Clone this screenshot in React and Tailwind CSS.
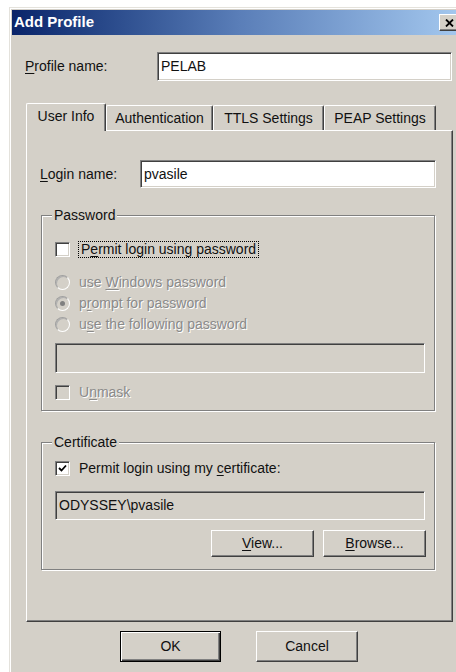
const sunken =
  'border border-t-[#808080] border-l-[#808080] border-b-white border-r-white shadow-[inset_1px_1px_0_#404040,inset_-1px_-1px_0_#d4d0c8]'
const raised =
  'border border-t-white border-l-white border-b-[#404040] border-r-[#404040] shadow-[inset_-1px_-1px_0_#808080]'
const dim = 'text-[#8a8a8a] [text-shadow:1px_1px_0_#fff]'

// mnemonic letter
function K({ children }) {
  return <span className="underline underline-offset-2">{children}</span>
}

function CheckBox({ checked, disabled }) {
  return (
    <span
      className={`w-[15px] h-[15px] shrink-0 flex items-center justify-center ${sunken} ${
        disabled ? 'bg-[#d4d0c8]' : 'bg-white'
      }`}
    >
      {checked && (
        <svg width="9" height="9" viewBox="0 0 9 9">
          <polyline points="1,4 3.5,6.5 8,1.5" fill="none" stroke="#000" strokeWidth="1.8" />
        </svg>
      )}
    </span>
  )
}

function Radio({ on }) {
  return (
    <span className="w-[15px] h-[15px] shrink-0 rounded-full border border-t-[#a0a0a0] border-l-[#a0a0a0] border-b-white border-r-white bg-[#d4d0c8] shadow-[inset_1px_1px_0_#b0b0b0] flex items-center justify-center">
      {on && <span className="w-[5px] h-[5px] rounded-full bg-[#808080]" />}
    </span>
  )
}

function Group({ title, className, children }) {
  return (
    <div className={`relative border border-[#808080] shadow-[1px_1px_0_#fff,inset_1px_1px_0_#fff] ${className}`}>
      <span className="absolute -top-[9px] left-[10px] bg-[#d4d0c8] px-[2px] leading-[16px]">{title}</span>
      {children}
    </div>
  )
}

function Button({ children, def, className }) {
  return (
    <button
      className={`flex items-center justify-center bg-[#d4d0c8] ${
        def
          ? 'border border-black shadow-[inset_1px_1px_0_#fff,inset_-1px_-1px_0_#404040,inset_-2px_-2px_0_#808080]'
          : raised
      } ${className}`}
    >
      {children}
    </button>
  )
}

function Tab({ label, active, className }) {
  return (
    <div
      className={`flex items-center justify-center bg-[#d4d0c8] border-t border-l border-t-white border-l-white border-r border-r-[#404040] rounded-t-[2px] shadow-[inset_-1px_0_0_#808080] ${
        active ? 'h-[28px] relative z-10 -mb-px pb-[2px]' : 'h-[25px]'
      } ${className}`}
    >
      {label}
    </div>
  )
}

export default function App() {
  return (
    <div className="h-[672px] overflow-hidden bg-white pt-[7px] pl-[9px] font-['Liberation_Sans',Arial,sans-serif] text-[14px] text-[#111]">
      <div className="w-[460px] h-[700px] bg-[#d4d0c8] p-[3px] shadow-[inset_1px_1px_0_#e4e2dc,inset_2px_2px_0_#fff]">
        {/* title bar */}
        <div className="h-[25px] flex items-center justify-between bg-linear-to-r from-[#0a246a] via-[#5a7eb8] to-[#a6caf0]">
          <span className="pl-[2px] text-white font-bold text-[15px]">Add Profile</span>
          <span className={`mr-[6px] w-[21px] h-[17px] bg-[#d4d0c8] flex items-center justify-center ${raised}`}>
            <svg width="9" height="8" viewBox="0 0 9 8">
              <path d="M1 0.5 L8 7.5 M8 0.5 L1 7.5" stroke="#000" strokeWidth="1.8" />
            </svg>
          </span>
        </div>

        {/* profile name */}
        <div className="mt-[17px] ml-[13px] flex items-center">
          <span className="w-[132px]">
            <K>P</K>rofile name:
          </span>
          <div className={`w-[295px] h-[29px] bg-white pl-[3px] pt-[3px] ${sunken}`}>PELAB</div>
        </div>

        {/* tabs */}
        <div className="mt-[22px] ml-[14px] flex items-end">
          <Tab label="User Info" active className="w-[80px]" />
          <Tab label="Authentication" className="w-[107px]" />
          <Tab label="TTLS Settings" className="w-[111px]" />
          <Tab label="PEAP Settings" className="w-[112px]" />
        </div>

        <div className={`ml-[14px] w-[427px] h-[492px] ${raised} flex flex-col`}>
          <div className="mt-[29px] ml-[13px] flex items-center">
            <span className="w-[100px]">
              <K>L</K>ogin name:
            </span>
            <div className={`w-[296px] h-[28px] bg-white pl-[3px] pt-[3px] ${sunken}`}>pvasile</div>
          </div>

          {/* password */}
          <Group title="Password" className="mt-[27px] ml-[14px] w-[394px] h-[196px] pl-[13px] pt-[25px]">
            <div className="flex items-center h-[17px]">
              <CheckBox />
              <span className="ml-[8px] border border-dotted border-black px-[2px] leading-[15px]">
                P<K>e</K>rmit login using password
              </span>
            </div>
            <div className={`mt-[14px] flex flex-col ${dim}`}>
              <div className="flex items-center gap-[9px] h-[21px]">
                <Radio />
                <span>
                  use <K>W</K>indows password
                </span>
              </div>
              <div className="flex items-center gap-[9px] h-[21px]">
                <Radio on />
                <span>
                  p<K>r</K>ompt for password
                </span>
              </div>
              <div className="flex items-center gap-[9px] h-[21px]">
                <Radio />
                <span>
                  u<K>s</K>e the following password
                </span>
              </div>
            </div>
            <div className={`mt-[8px] w-[370px] h-[30px] bg-[#d4d0c8] ${sunken}`} />
            <div className={`mt-[11px] flex items-center gap-[9px] h-[17px] ${dim}`}>
              <CheckBox disabled />
              <span>
                U<K>n</K>mask
              </span>
            </div>
          </Group>

          {/* certificate */}
          <Group title="Certificate" className="mt-[31px] ml-[14px] w-[394px] h-[128px] pl-[13px] pt-[17px]">
            <div className="flex items-center gap-[9px] h-[17px]">
              <CheckBox checked />
              <span>
                Permit login using my <K>c</K>ertificate:
              </span>
            </div>
            <div className={`mt-[14px] w-[370px] h-[29px] bg-[#d4d0c8] pl-[3px] pt-[3px] ${sunken}`}>
              ODYSSEY\pvasile
            </div>
            <div className="mt-[10px] w-[371px] flex justify-end gap-[9px]">
              <Button className="w-[103px] h-[27px]">
                <span>
                  <K>V</K>iew...
                </span>
              </Button>
              <Button className="w-[103px] h-[27px]">
                <span>
                  <K>B</K>rowse...
                </span>
              </Button>
            </div>
          </Group>
        </div>

        {/* dialog buttons */}
        <div className="mt-[9px] ml-[108px] flex gap-[35px]">
          <Button def className="w-[101px] h-[31px]">
            OK
          </Button>
          <Button className="w-[102px] h-[31px]">Cancel</Button>
        </div>
      </div>
    </div>
  )
}
